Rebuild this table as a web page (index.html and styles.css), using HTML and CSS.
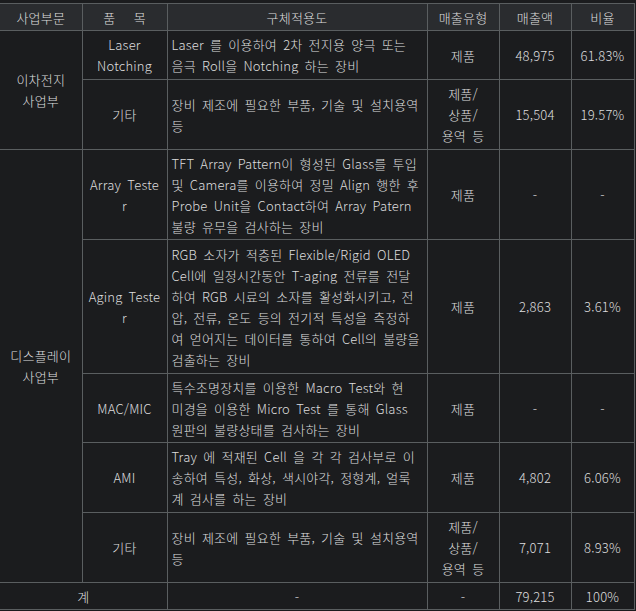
FILE: index.html
```html
<!DOCTYPE html>
<html lang="ko">
<head>
<meta charset="utf-8">
<title>사업부문</title>
<link rel="stylesheet" href="styles.css">
</head>
<body>
<table class="sales">
  <colgroup>
    <col class="c1"><col class="c2"><col class="c3"><col class="c4"><col class="c5"><col class="c6">
  </colgroup>
  <thead>
    <tr class="head">
      <th>사업부문</th>
      <th>품&nbsp;&nbsp;&nbsp;목</th>
      <th>구체적용도</th>
      <th>매출유형</th>
      <th>매출액</th>
      <th>비율</th>
    </tr>
  </thead>
  <tbody>
    <tr class="r1">
      <td rowspan="2">이차전지<br>사업부</td>
      <td>Laser<br>Notching</td>
      <td class="desc">Laser 를 이용하여 2차 전지용 양극 또는<br>음극 Roll을 Notching 하는 장비</td>
      <td>제품</td>
      <td>48,975</td>
      <td>61.83%</td>
    </tr>
    <tr class="r2">
      <td>기타</td>
      <td class="desc">장비 제조에 필요한 부품, 기술 및 설치용역<br>등</td>
      <td>제품/<br>상품/<br>용역 등</td>
      <td>15,504</td>
      <td>19.57%</td>
    </tr>
    <tr class="r3">
      <td rowspan="5">디스플레이<br>사업부</td>
      <td>Array Teste<br>r</td>
      <td class="desc">TFT Array Pattern이 형성된 Glass를 투입<br>및 Camera를 이용하여 정밀 Align 행한 후<br>Probe Unit을 Contact하여 Array Patern<br>불량 유무을 검사하는 장비</td>
      <td>제품</td>
      <td>-</td>
      <td>-</td>
    </tr>
    <tr class="r4">
      <td>Aging Teste<br>r</td>
      <td class="desc">RGB 소자가 적층된 Flexible/Rigid OLED<br>Cell에 일정시간동안 T-aging 전류를 전달<br>하여 RGB 시료의 소자를 활성화시키고, 전<br>압, 전류, 온도 등의 전기적 특성을 측정하<br>여 얻어지는 데이터를 통하여 Cell의 불량을<br>검출하는 장비</td>
      <td>제품</td>
      <td>2,863</td>
      <td>3.61%</td>
    </tr>
    <tr class="r5">
      <td>MAC/MIC</td>
      <td class="desc">특수조명장치를 이용한 Macro Test와 현<br>미경을 이용한 Micro Test 를 통해 Glass<br>원판의 불량상태를 검사하는 장비</td>
      <td>제품</td>
      <td>-</td>
      <td>-</td>
    </tr>
    <tr class="r6">
      <td>AMI</td>
      <td class="desc">Tray 에 적재된 Cell 을 각 각 검사부로 이<br>송하여 특성, 화상, 색시야각, 정형계, 얼룩<br>계 검사를 하는 장비</td>
      <td>제품</td>
      <td>4,802</td>
      <td>6.06%</td>
    </tr>
    <tr class="r7">
      <td>기타</td>
      <td class="desc">장비 제조에 필요한 부품, 기술 및 설치용역<br>등</td>
      <td>제품/<br>상품/<br>용역 등</td>
      <td>7,071</td>
      <td>8.93%</td>
    </tr>
    <tr class="total">
      <td colspan="2">계</td>
      <td>-</td>
      <td>-</td>
      <td>79,215</td>
      <td>100%</td>
    </tr>
  </tbody>
</table>
</body>
</html>
```
FILE: styles.css
```css
html, body {
  margin: 0;
  padding: 0;
  background: #1b1c1e;
}
body {
  padding-top: 3px;
  font-family: "Noto Sans CJK KR", "Noto Sans", sans-serif;
  font-size: 13px;
  font-weight: 300;
  line-height: 21px;
  word-spacing: 2.3px;
  letter-spacing: 0.2px;
  color: #dedede;
}
.sales {
  border-collapse: collapse;
  table-layout: fixed;
  width: 634px;
  border-top: 1px solid #77756a;
  border-bottom: 1px solid #77756a;
}
.c1 { width: 82px; }
.c2 { width: 85px; }
.c3 { width: 260px; }
.c4 { width: 72px; }
.c5 { width: 72px; }
.c6 { width: 63px; }
.sales th,
.sales td {
  border: 1px solid #5a5e60;
  padding: 2px 1px;
  text-align: center;
  vertical-align: middle;
  font-weight: 300;
  white-space: nowrap;
  overflow: hidden;
}
.sales tr > :first-child { border-left: none; }
.sales tr > :last-child { border-right: 1px solid #5a5e60; }
.sales td[rowspan] { border-left: none; }
.head th {
  background: #2a2c2f;
  height: 22px;
}
.sales td.desc {
  text-align: left;
  padding-left: 4px;
}
.r1 td { height: 44px; }
.r2 td { height: 65px; }
.r3 td { height: 85px; }
.r4 td { height: 129px; }
.r5 td { height: 64px; }
.r6 td { height: 65px; }
.r7 td { height: 65px; }
.total td { height: 22px; }
```
